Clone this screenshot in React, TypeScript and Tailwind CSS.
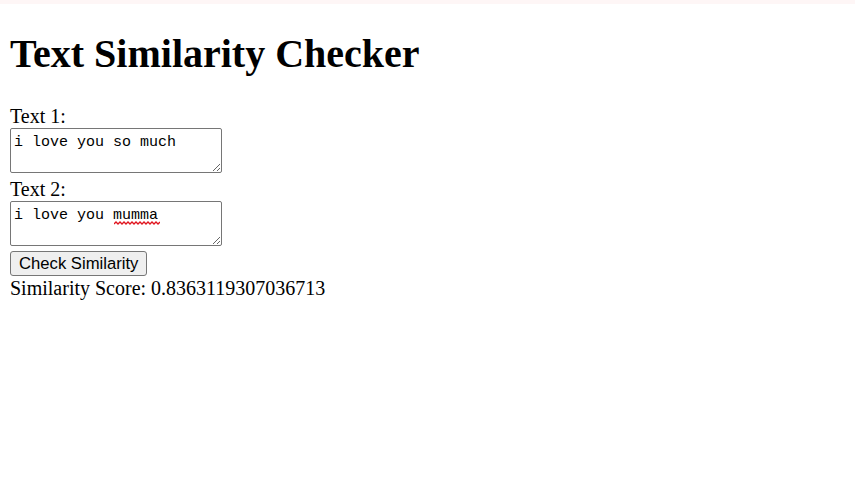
import { useState } from 'react';

export default function App() {
  const [text1, setText1] = useState('i love you so much')
  const [text2, setText2] = useState('i love you mumma')
  const [score] = useState('0.8363119307036713')

  const boxClass =
    "block w-[212px] h-[45px] border border-[#767676] rounded-[2px] bg-white px-[3px] pt-[5px] pb-[1px] text-[15px] leading-[17px] text-black font-['Liberation_Mono',monospace] outline-none"

  return (
    <div className="min-h-screen bg-white">
      <div className="h-[4px] bg-[#fef6f6]" />
      <div className="px-[10px] text-black font-['Liberation_Serif',serif]">
        <h1 className="mt-[27px] text-[40px] font-bold leading-[46px]">Text Similarity Checker</h1>

        <label className="mt-[28px] block text-[20px] leading-[23px]">Text 1:</label>
        <textarea
          className={boxClass}
          value={text1}
          spellCheck={false}
          onChange={(e) => setText1(e.target.value)}
        />

        <label className="mt-[5px] block text-[20px] leading-[23px]">Text 2:</label>
        <div className="relative w-[212px]">
          <textarea
            className={boxClass}
            value={text2}
            spellCheck={false}
            onChange={(e) => setText2(e.target.value)}
          />
          {/* spellcheck squiggle under "mumma" */}
          <svg className="absolute left-[104px] top-[20px] pointer-events-none" width="46" height="4" viewBox="0 0 46 4">
            <polyline
              points="0,3 2,1 4,3 6,1 8,3 10,1 12,3 14,1 16,3 18,1 20,3 22,1 24,3 26,1 28,3 30,1 32,3 34,1 36,3 38,1 40,3 42,1 44,3 46,1"
              fill="none"
              stroke="#e0141e"
              strokeWidth="1.3"
            />
          </svg>
        </div>

        <button className="mt-[5px] block h-[25px] rounded-[3px] border border-[#767676] bg-[#efefef] px-[8px] text-[16.67px] leading-[19px] text-black font-['Liberation_Sans',Arial,sans-serif]">
          Check Similarity
        </button>

        <p className="mt-[1px] text-[20px] leading-[23px]">Similarity Score: {score}</p>
      </div>
    </div>
  );
}
